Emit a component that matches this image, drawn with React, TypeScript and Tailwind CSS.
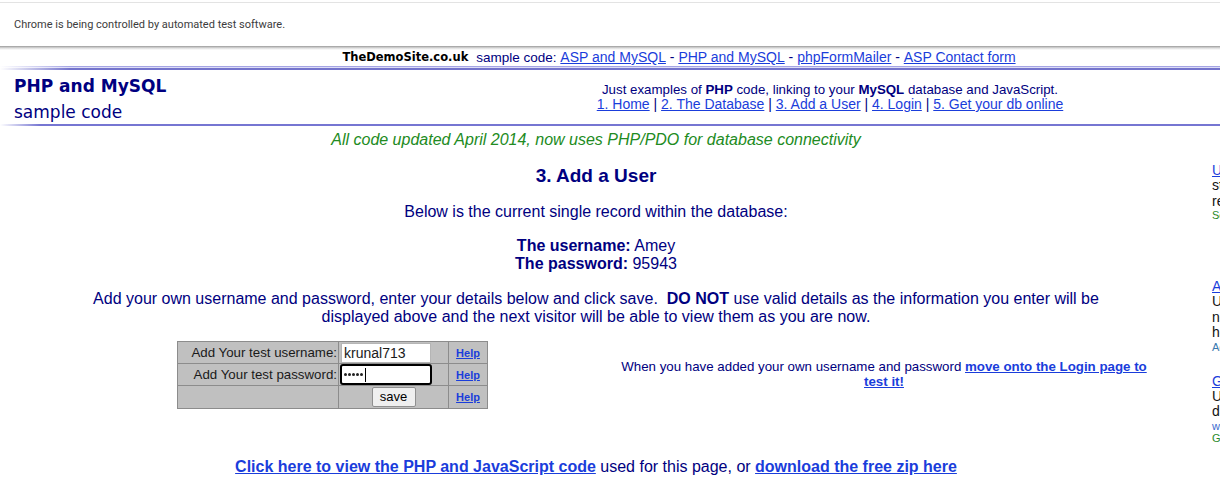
import React from "react";

const LINK = "text-[#1a3ddb] underline";
const NAVY = "text-[#000080]";

function Ad({ title, lines, small }: { title: string; lines: string[]; small: { t: string; c: string }[] }) {
  return (
    <div className="w-[180px]">
      <a className="block text-[14px] leading-[16px] text-[#1a3ddb] underline whitespace-nowrap">{title}</a>
      {lines.map((l, i) => (
        <div key={i} className="text-[14px] leading-[15.5px] text-[#111] whitespace-nowrap">{l}</div>
      ))}
      {small.map((s, i) => (
        <div key={i} className={`text-[11px] leading-[12px] whitespace-nowrap ${s.c}`}>{s.t}</div>
      ))}
    </div>
  );
}

export default function App() {
  return (
    <div className="w-[1220px] h-[497px] overflow-hidden bg-white font-['Liberation_Sans',Arial,sans-serif] relative">
      {/* Chrome infobar */}
      <div className="h-[46px] bg-white">
        <div className="h-[2px]" />
        <div className="h-px bg-[#e3e3e3]" />
        <div className="h-[43px] flex items-center pt-[2px] pl-[14px] font-['Roboto',sans-serif] text-[11px] text-[#3c3c3c]">
          Chrome is being controlled by automated test software.
        </div>
      </div>
      <div className="h-[4px] bg-gradient-to-b from-[#9a9a9a] via-[#dcdcdc] to-white" />

      {/* site header */}
      <div className="w-[1358px]">
        <div className="h-[15px] flex items-center justify-center text-[14px] leading-[15px] whitespace-nowrap">
          <span className="font-['DejaVu_Sans',sans-serif] font-bold text-[11.5px] text-black">TheDemoSite.co.uk</span>
          <span className={`${NAVY} ml-[8px] text-[13.5px]`}>sample code:&nbsp;</span>
          <a className={`${LINK}`}>ASP and MySQL</a>
          <span className={NAVY}>&nbsp;-&nbsp;</span>
          <a className={LINK}>PHP and MySQL</a>
          <span className={NAVY}>&nbsp;-&nbsp;</span>
          <a className={LINK}>phpFormMailer</a>
          <span className={NAVY}>&nbsp;-&nbsp;</span>
          <a className={LINK}>ASP Contact form</a>
        </div>
        <div className="h-px" />
        <div className="h-px bg-[linear-gradient(to_right,white,#a4a4e4_70px)]" />
        <div className="h-px bg-[linear-gradient(to_right,white,#dcdcf6_70px)]" />
        <div className="h-[2px] bg-[linear-gradient(to_right,white,#7474cc_70px)]" />

        <div className="h-[54px] flex">
          <div className="w-[400px] pl-[14px] pt-[3px] text-[#000080] font-['DejaVu_Sans',sans-serif]">
            <div className="text-[17px] leading-[26px] font-bold">PHP and MySQL</div>
            <div className="text-[17px] leading-[26px]">sample code</div>
          </div>
          <div className="w-[860px] flex flex-col items-center pt-[12px] text-[13.3px] leading-[15px] whitespace-nowrap">
            <div className={NAVY}>
              Just examples of <b>PHP</b> code, linking to your <b>MySQL</b> database and JavaScript.
            </div>
            <div className={`${NAVY} text-[14px]`}>
              <a className={LINK}>1. Home</a> | <a className={LINK}>2. The Database</a> |{" "}
              <a className={LINK}>3. Add a User</a> | <a className={LINK}>4. Login</a> |{" "}
              <a className={LINK}>5. Get your db online</a>
            </div>
          </div>
        </div>
        <div className="h-[2px] bg-[linear-gradient(to_right,white,#7676d2_40px)]" />
      </div>

      {/* main area */}
      <div className="flex">
        <div className="w-[1192px] shrink-0 flex flex-col items-center text-center">
          <div className="mt-[5px] text-[16px] leading-[18px] italic text-[#228b22]">
            All code updated April 2014, now uses PHP/PDO for database connectivity
          </div>
          <h1 className={`mt-[15px] text-[19px] leading-[23px] font-bold ${NAVY}`}>3. Add a User</h1>
          <div className={`mt-[16px] text-[16px] leading-[18px] ${NAVY}`}>
            Below is the current single record within the database:
          </div>
          <div className={`mt-[16px] text-[16px] leading-[18px] ${NAVY}`}>
            <div><b>The username:</b> Amey</div>
            <div><b>The password:</b> 95943</div>
          </div>
          <div className={`mt-[17px] text-[16px] leading-[18px] ${NAVY} whitespace-nowrap`}>
            Add your own username and password, enter your details below and click save.&nbsp; <b>DO NOT</b> use valid details as the information you enter will be
            <br />
            displayed above and the next visitor will be able to view them as you are now.
          </div>

          <div className="w-full flex mt-[15px]">
            <div className="ml-[177px]">
              <table className="table-fixed w-[310px] border-collapse border border-[#8c8c8c] bg-[#c0c0c0] text-[13.3px] text-[#1a1a1a]">
                <colgroup>
                  <col className="w-[161px]" />
                  <col className="w-[110px]" />
                  <col className="w-[39px]" />
                </colgroup>
                <tbody>
                  <tr className="h-[22px]">
                    <td className="border border-[#8c8c8c] text-right pr-px p-0 whitespace-nowrap">Add Your test username:</td>
                    <td className="border border-[#8c8c8c] p-0 pl-[2px] text-left">
                      <div className="w-[90px] h-[20px] bg-white border border-[#b5b5b5] pl-[2px] leading-[18px] text-[14px]">krunal713</div>
                    </td>
                    <td className="border border-[#8c8c8c] p-0 text-center">
                      <a className="text-[11px] font-bold text-[#1a3ddb] underline">Help</a>
                    </td>
                  </tr>
                  <tr className="h-[22px]">
                    <td className="border border-[#8c8c8c] text-right pr-px p-0 whitespace-nowrap">Add Your test password:</td>
                    <td className="border border-[#8c8c8c] p-0 pl-[1px] text-left">
                      <div className="w-[92px] h-[21px] bg-white border-2 border-black rounded-[3px] pl-[2px] flex items-center gap-[1px]">
                        {[0, 1, 2, 3, 4].map((i) => (
                          <span key={i} className="w-[3px] h-[3px] rounded-full bg-[#222]" />
                        ))}
                        <span className="ml-[1px] w-px h-[14px] bg-black" />
                      </div>
                    </td>
                    <td className="border border-[#8c8c8c] p-0 text-center">
                      <a className="text-[11px] font-bold text-[#1a3ddb] underline">Help</a>
                    </td>
                  </tr>
                  <tr className="h-[23px]">
                    <td className="border border-[#8c8c8c] p-0" />
                    <td className="border border-[#8c8c8c] p-0 text-center">
                      <button className="w-[44px] h-[20px] bg-[#efefef] border border-[#8f8f8f] rounded-[2px] text-[13px] text-black leading-[18px] align-middle">save</button>
                    </td>
                    <td className="border border-[#8c8c8c] p-0 text-center">
                      <a className="text-[11px] font-bold text-[#1a3ddb] underline">Help</a>
                    </td>
                  </tr>
                </tbody>
              </table>
            </div>
            <div className={`ml-[126px] w-[540px] pt-[18px] text-center text-[13.3px] leading-[15px] ${NAVY} whitespace-nowrap`}>
              When you have added your own username and password{" "}
              <a className={`${LINK} font-bold`}>move onto the Login page to</a>
              <br />
              <a className={`${LINK} font-bold`}>test it!</a>
            </div>
          </div>

          <div className={`mt-[49px] text-[16px] leading-[18px] ${NAVY} whitespace-nowrap`}>
            <a className={`${LINK} font-bold`}>Click here to view the PHP and JavaScript code</a> used for this page, or{" "}
            <a className={`${LINK} font-bold`}>download the free zip here</a>
          </div>
        </div>

        <div className="ml-[20px] shrink-0 pt-[36px] flex flex-col">
          <Ad title="Unlimited Hosting" lines={["store your files", "reliably today"]} small={[{ t: "Secure Hosting", c: "text-[#2a8a2a]" }]} />
          <div className="h-[57px]" />
          <Ad title="Affordable Web" lines={["Unlimited sites", "no setup fees", "host anything"]} small={[{ t: "Ad www.host.com", c: "text-[#3a7ab0]" }]} />
          <div className="h-[20px]" />
          <Ad title="Get Online Now" lines={["Upload your", "database today"]} small={[{ t: "www.example.com", c: "text-[#3a6ad0]" }, { t: "Go Daddy", c: "text-[#2a8a2a]" }]} />
        </div>
      </div>
    </div>
  );
}
